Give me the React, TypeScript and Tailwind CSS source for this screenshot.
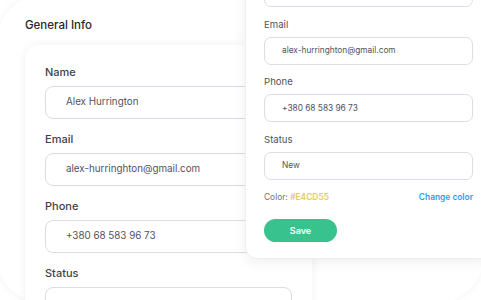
import React from 'react';

type FieldProps = { label: string; value?: string };

function Field({ label, value }: FieldProps) {
  return (
    <div className="flex flex-col">
      <span className="text-[11px] leading-[14px] font-medium text-[#3f3f46]">{label}</span>
      <div className="mt-[7px] h-[33px] w-full rounded-[8px] border border-[#dcdde4] bg-white pl-[20px] flex items-center">
        <span className="text-[9.8px] text-[#52525b]">{value}</span>
      </div>
    </div>
  );
}

function SmallField({ label, value }: FieldProps) {
  return (
    <div className="flex flex-col">
      <span className="text-[9.6px] leading-[12px] text-[#52525b]">{label}</span>
      <div className="mt-[6px] h-[28px] w-full rounded-[7px] border border-[#dcdde4] bg-white pl-[17px] flex items-center">
        <span className="text-[8.3px] text-[#52525b]">{value}</span>
      </div>
    </div>
  );
}

export default function App() {
  return (
    <div className="relative w-[481px] h-[300px] overflow-hidden bg-white font-['Inter',sans-serif]">
      {/* background panel */}
      <div className="-ml-[4px] -mt-[6px] w-[488px] h-[310px] rounded-[50px] bg-white shadow-[0_0_10px_rgba(0,0,0,0.05)] pl-[29px] pt-[24px]">
        <h2 className="text-[11.5px] leading-[14px] font-medium text-[#27272a]">General Info</h2>

        {/* main card */}
        <div className="mt-[13px] w-[287px] h-[400px] rounded-[14px] bg-white shadow-[0_0_10px_rgba(0,0,0,0.06)] px-[20px] pt-[20px] flex flex-col gap-[13px]">
          <Field label="Name" value="Alex Hurrington" />
          <Field label="Email" value="alex-hurringhton@gmail.com" />
          <Field label="Phone" value="+380 68 583 96 73" />
          <Field label="Status" />
        </div>
      </div>

      {/* overlay card, scrolled so only the lower fields show */}
      <div className="absolute left-[245px] bottom-[41px] w-[247px] rounded-[12px] border border-[#efeff2] bg-white shadow-[0_3px_14px_rgba(0,0,0,0.07)] px-[18px] pt-[18px] pb-[16px]">
        <div className="flex flex-col gap-[11.5px]">
          <div className="h-[28px] w-full rounded-[7px] border border-[#dcdde4] bg-white" />
          <SmallField label="Email" value="alex-hurringhton@gmail.com" />
          <SmallField label="Phone" value="+380 68 583 96 73" />
          <SmallField label="Status" value="New" />
        </div>
        <div className="mt-[11.5px] flex items-center justify-between text-[8.4px] leading-[12px]">
          <span className="text-[#71717a]">
            Color: <span className="font-semibold text-[#E4CD55]">#E4CD55</span>
          </span>
          <span className="font-semibold text-[#2d9cf0]">Change color</span>
        </div>
        <button className="mt-[16px] h-[23px] w-[73px] rounded-full bg-[#38c38e] text-[9px] font-semibold text-white">
          Save
        </button>
      </div>
    </div>
  );
}
